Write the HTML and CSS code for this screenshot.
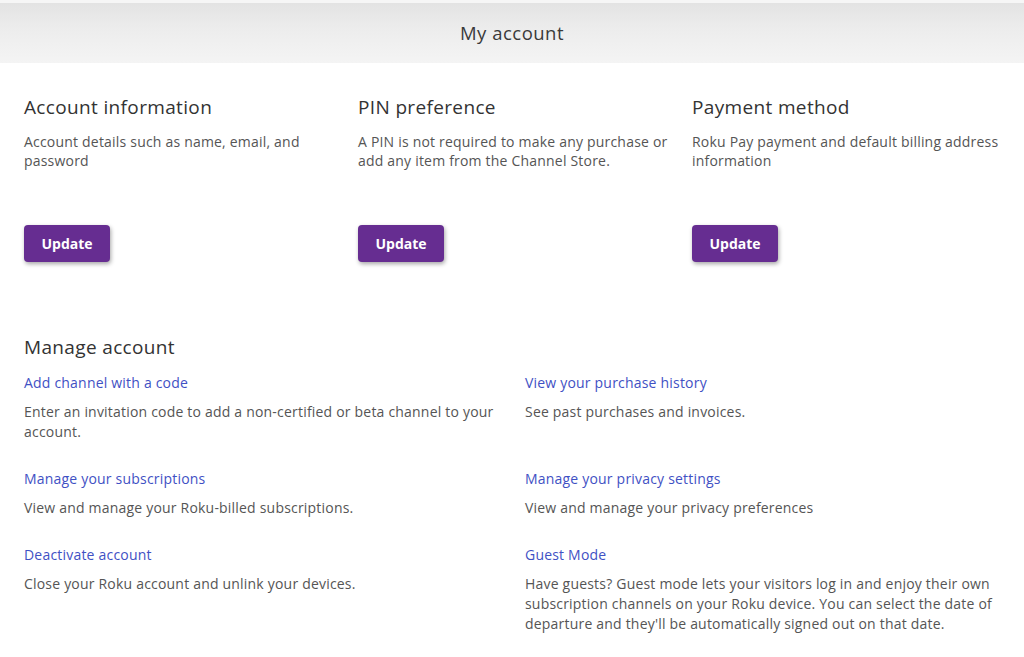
FILE: index.html
```html
<!DOCTYPE html>
<html>
<head>
<meta charset="utf-8">
<link rel="stylesheet" href="styles.css">
</head>
<body>
<header class="topbar"><h1 class="topbar-title">My account</h1></header>
<main class="page">
  <section class="cards">
    <div class="card">
      <h2 class="card-title">Account information</h2>
      <p class="card-desc">Account details such as name, email, and password</p>
      <button class="btn">Update</button>
    </div>
    <div class="card">
      <h2 class="card-title">PIN preference</h2>
      <p class="card-desc">A PIN is not required to make any purchase or add any item from the Channel Store.</p>
      <button class="btn">Update</button>
    </div>
    <div class="card">
      <h2 class="card-title">Payment method</h2>
      <p class="card-desc">Roku Pay payment and default billing address information</p>
      <button class="btn">Update</button>
    </div>
  </section>
  <section class="manage">
    <h2 class="manage-title">Manage account</h2>
    <div class="manage-grid">
      <div class="item">
        <a class="item-link" href="#">Add channel with a code</a>
        <p class="item-desc">Enter an invitation code to add a non-certified or beta channel to your account.</p>
      </div>
      <div class="item">
        <a class="item-link" href="#">View your purchase history</a>
        <p class="item-desc">See past purchases and invoices.</p>
      </div>
      <div class="item">
        <a class="item-link" href="#">Manage your subscriptions</a>
        <p class="item-desc">View and manage your Roku-billed subscriptions.</p>
      </div>
      <div class="item">
        <a class="item-link" href="#">Manage your privacy settings</a>
        <p class="item-desc">View and manage your privacy preferences</p>
      </div>
      <div class="item">
        <a class="item-link" href="#">Deactivate account</a>
        <p class="item-desc">Close your Roku account and unlink your devices.</p>
      </div>
      <div class="item">
        <a class="item-link" href="#">Guest Mode</a>
        <p class="item-desc">Have guests? Guest mode lets your visitors log in and enjoy their own subscription channels on your Roku device. You can select the date of departure and they'll be automatically signed out on that date.</p>
      </div>
    </div>
  </section>
</main>
</body>
</html>
```

FILE: styles.css
```css
* { box-sizing: border-box; }
html, body { margin: 0; padding: 0; background: #fff; }
body {
  font-family: "Open Sans", "Liberation Sans", sans-serif;
  color: #555;
  width: 1024px;
  height: 657px;
  overflow: hidden;
}
.topbar {
  height: 63px;
  border-top: 3px solid #f6f6f6;
  background: linear-gradient(to bottom, #e3e3e3 0%, #ececec 40%, #f4f4f4 100%);
  display: flex;
  align-items: center;
  justify-content: center;
}
.topbar-title {
  margin: 0;
  font-size: 18.5px;
  font-weight: 400;
  color: #3a3a3a;
  line-height: 24px;
  letter-spacing: 0.5px;
}
.page { padding: 32px 0 0 24px; }
.cards {
  display: grid;
  grid-template-columns: 334px 334px 332px;
}
.card { padding-right: 20px; }
.card-title {
  margin: 0;
  font-size: 19px;
  font-weight: 400;
  color: #333;
  line-height: 24px;
  letter-spacing: 0.35px;
}
.card-desc {
  margin: 12.5px 0 0;
  font-size: 14px;
  line-height: 19px;
  letter-spacing: 0.2px;
  color: #555;
  min-height: 38px;
}
.btn {
  margin-top: 55.5px;
  display: block;
  width: 86px;
  height: 37px;
  border: none;
  border-radius: 4px;
  background: #662d91;
  color: #fff;
  font-family: "Open Sans", "Liberation Sans", sans-serif;
  font-weight: 700;
  font-size: 14px;
  box-shadow: 1px 2px 4px rgba(0,0,0,0.35);
  padding: 0;
}
.manage { margin-top: 73px; }
.manage-title {
  margin: 0;
  font-size: 19px;
  font-weight: 400;
  color: #333;
  line-height: 24px;
  letter-spacing: 0.35px;
}
.manage-grid {
  margin-top: 14px;
  display: grid;
  grid-template-columns: 501px 475px;
  row-gap: 27.5px;
}
.item { padding-right: 4px; }
.item-link {
  display: block;
  font-size: 14px;
  line-height: 20px;
  letter-spacing: 0.2px;
  color: #3f51c4;
  text-decoration: none;
}
.item-desc {
  margin: 8.5px 0 0;
  font-size: 14px;
  line-height: 20px;
  letter-spacing: 0.2px;
  color: #555;
}
```
